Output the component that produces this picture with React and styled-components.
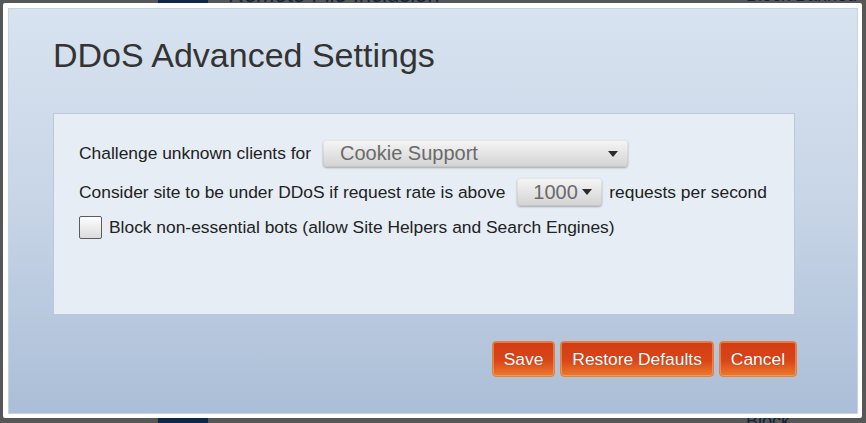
import React from "react";
import styled, { createGlobalStyle } from "styled-components";

const Global = createGlobalStyle`
  html, body { margin: 0; padding: 0; }
  body {
    width: 866px; height: 423px; overflow: hidden;
    background: #575757;
    font-family: "Liberation Sans", Arial, sans-serif;
  }
`;

const Backdrop = styled.div`
  height: 423px;
  display: flex;
  flex-direction: column;
  justify-content: space-between;
  overflow: hidden;
  background: #575757;
`;

const BgRow = styled.div`
  display: flex;
  align-items: center;
  height: 30px;
  margin-top: ${(p) => p.$top || 0}px;
  margin-bottom: ${(p) => p.$bottom || 0}px;
  color: #13233a;
  font-size: 22px;
`;

const BgIcon = styled.div`
  width: 50px; height: 30px;
  margin-left: 158px; margin-right: 20px;
  background: #102848;
`;

const BgName = styled.div`
  flex: 1;
`;

const BgAction = styled.div`
  width: 120px;
  font-size: 18px;
`;

const Dialog = styled.div`
  position: fixed;
  top: 3px; left: 3px;
  width: 859px; height: 415px;
  box-sizing: border-box;
  border-style: solid;
  border-color: #fff;
  border-width: 5px 4px 4px 5px;
  border-radius: 2px;
`;

const DialogInner = styled.div`
  height: 100%;
  box-sizing: border-box;
  border: 1px solid #c9d3df;
  background: linear-gradient(#d8e3f0, #c9d6e7 45%, #abbed7);
  padding: 26px 62px 0 44px;
  display: flex;
  flex-direction: column;
`;

const Title = styled.h1`
  margin: 0;
  font-weight: normal;
  font-size: 34px;
  line-height: 40px;
  color: #333;
`;

const Panel = styled.div`
  margin-top: 38px;
  height: 202px;
  box-sizing: border-box;
  background: #e6edf5;
  border: 1px solid #b9c8da;
  padding: 26px 25px;
  display: flex;
  flex-direction: column;
  gap: 10px;
`;

const Row = styled.div`
  display: flex;
  align-items: center;
  font-size: 17.4px;
  color: #222;
  margin-top: ${(p) => p.$mt || 0}px;
`;

const Select = styled.div`
  width: ${(p) => p.$w}px;
  height: ${(p) => p.$h}px;
  margin-left: 12px;
  margin-right: 7px;
  box-sizing: border-box;
  border-radius: 4px;
  background: linear-gradient(#f6f6f6, #e4e4e4 50%, #d3d3d3);
  box-shadow: 0 1px 2px rgba(0, 0, 0, 0.3), inset 0 0 0 1px rgba(0,0,0,0.06);
  display: flex;
  align-items: center;
  justify-content: space-between;
  padding: 0 10px 0 ${(p) => p.$pl}px;
  font-size: 20px;
  color: #6a6a6a;
`;

const Arrow = styled.span`
  width: 0; height: 0;
  border-left: 5px solid transparent;
  border-right: 5px solid transparent;
  border-top: 6px solid #2b2b2b;
`;

const Check = styled.span`
  width: 23px; height: 23px;
  box-sizing: border-box;
  border: 1px solid #5c5c5c;
  border-radius: 2px;
  background: linear-gradient(#fdfdfd, #dcdcdc);
  margin-right: 7px;
`;

const Buttons = styled.div`
  margin-top: 26px;
  display: flex;
  justify-content: flex-end;
  gap: 5px;
  margin-right: -2px;
`;

const Button = styled.button`
  height: 36px;
  padding: 0 11px;
  border: 1px solid #e0823e;
  border-radius: 4px;
  background: linear-gradient(#d23c12, #d9461a 55%, #ec7a2c);
  box-shadow: inset 0 0 0 1px rgba(255, 190, 130, 0.45);
  color: #fff;
  font-family: "Liberation Sans", Arial, sans-serif;
  font-size: 17.4px;
  text-shadow: 0 0 1px rgba(120, 30, 0, 0.5);
`;

export default function App() {
  return (
    <>
      <Global />
      <Backdrop>
        <BgRow $top={-20}>
          <BgIcon />
          <BgName>Remote File Inclusion</BgName>
          <BgAction>Block Banned</BgAction>
        </BgRow>
        <BgRow $bottom={-24}>
          <BgIcon />
          <BgName>Illegal Resource Access</BgName>
          <BgAction>Block Unknown</BgAction>
        </BgRow>
      </Backdrop>
      <Dialog>
        <DialogInner>
          <Title>DDoS Advanced Settings</Title>
          <Panel>
            <Row>
              Challenge unknown clients for
              <Select $w={305} $h={27} $pl={17}>
                Cookie Support
                <Arrow />
              </Select>
            </Row>
            <Row $mt={1}>
              Consider site to be under DDoS if request rate is above
              <Select $w={85} $h={28} $pl={16}>
                1000
                <Arrow />
              </Select>
              requests per second
            </Row>
            <Row>
              <Check />
              Block non-essential bots (allow Site Helpers and Search Engines)
            </Row>
          </Panel>
          <Buttons>
            <Button>Save</Button>
            <Button>Restore Defaults</Button>
            <Button>Cancel</Button>
          </Buttons>
        </DialogInner>
      </Dialog>
    </>
  );
}
